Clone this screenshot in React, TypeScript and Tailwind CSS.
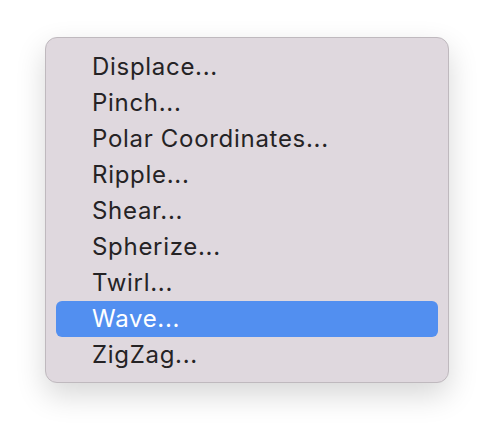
const items = [
  'Displace...',
  'Pinch...',
  'Polar Coordinates...',
  'Ripple...',
  'Shear...',
  'Spherize...',
  'Twirl...',
  'Wave...',
  'ZigZag...',
];

export default function App() {
  return (
    <div className="w-[494px] h-[436px] bg-white pt-[37px] pl-[45px]">
      <div className="w-[404px] rounded-[12px] border border-[#bfb9be] bg-[#dfd8de] pt-[11px] pb-[9px] px-[10px] shadow-[0_12px_30px_rgba(0,0,0,0.16)]">
        {items.map((item) => {
          const active = item === 'Wave...';
          return (
            <div
              key={item}
              className={`h-[36px] flex items-center pl-[36px] rounded-[6px] text-[24px] tracking-[0.7px] font-['Inter',sans-serif] ${
                active ? 'bg-[#528ff0] text-white' : 'text-[#252325]'
              }`}
            >
              {item}
            </div>
          );
        })}
      </div>
    </div>
  );
}
